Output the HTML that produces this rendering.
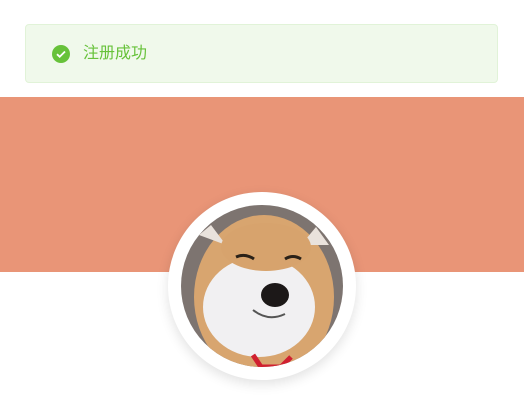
<!DOCTYPE html>
<html><head><meta charset="utf-8"><style>
html,body{margin:0;padding:0;width:524px;height:401px;background:#fff;overflow:hidden;position:relative;font-family:"Liberation Sans","Noto Sans CJK SC",sans-serif}
.alert{position:absolute;left:25px;top:24px;width:473px;height:59px;background:#f0f9eb;border:1px solid #e1f3d8;border-radius:4px;box-sizing:border-box}
.alert .ic{position:absolute;left:26px;top:20px}
.alert .t{position:absolute;left:57px;top:19px;font-size:16px;color:#67c23a;line-height:20px}
.banner{position:absolute;left:0;top:97px;width:524px;height:175px;background:#e99577}
.av{position:absolute;left:168px;top:192px;width:188px;height:188px;border-radius:50%;background:#fff;box-shadow:0 4px 12px rgba(0,0,0,.12)}
.av svg{position:absolute;left:13px;top:13px}
</style></head><body>
<div class="alert">
<svg class="ic" width="18" height="18" viewBox="0 0 18 18"><circle cx="9" cy="9" r="9" fill="#67c23a"/><path d="M5 9.2l2.7 2.6L13 6.5" stroke="#fff" stroke-width="1.8" fill="none"/></svg>
<div class="t">注册成功</div>
</div>
<div class="banner"></div>
<div class="av">
<svg width="162" height="162" viewBox="0 0 162 162">
<defs><clipPath id="c"><circle cx="81" cy="81" r="81"/></clipPath></defs>
<g clip-path="url(#c)">
<rect width="162" height="162" fill="#7d7470"/>
<ellipse cx="83" cy="92" rx="70" ry="82" fill="#d8a56f"/>
<path d="M18 30 L30 20 L45 40 Z" fill="#e9e2dc"/>
<path d="M148 40 L135 22 L120 40 Z" fill="#e9e2dc"/>
<ellipse cx="78" cy="102" rx="56" ry="50" fill="#f1f0f2"/>
<ellipse cx="85" cy="42" rx="45" ry="24" fill="#d7a36d"/>
<path d="M55 52 q9 -4 18 2" stroke="#2a2118" stroke-width="3" fill="none"/>
<path d="M104 54 q8 -5 16 0" stroke="#2a2118" stroke-width="3" fill="none"/>
<ellipse cx="94" cy="90" rx="14" ry="12" fill="#1c1818"/>
<path d="M72 105 q15 12 32 4" stroke="#555" stroke-width="2" fill="none"/>
<path d="M72 150 L80 162 L100 162 L110 152" stroke="#d02030" stroke-width="5" fill="none"/>
</g></svg>
</div>
</body></html>
